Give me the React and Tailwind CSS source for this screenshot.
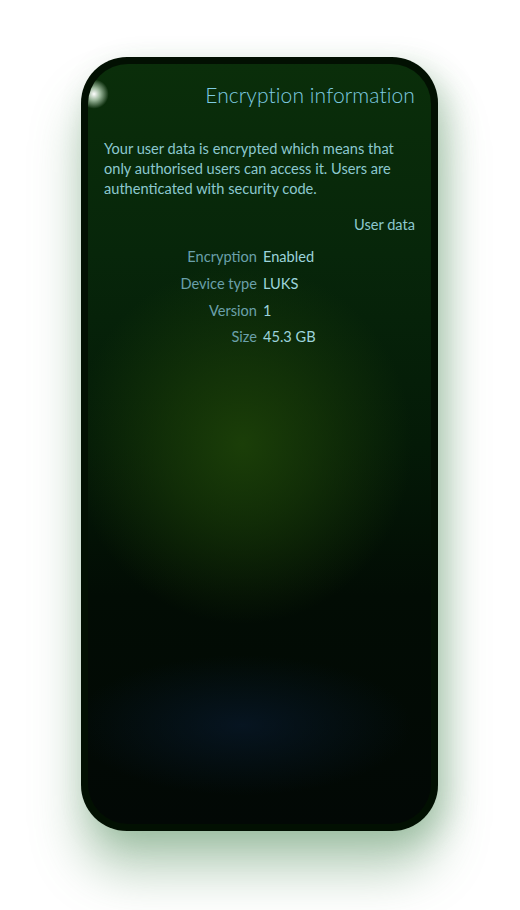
export default function App() {
  const rows = [
    ["Encryption", "Enabled"],
    ["Device type", "LUKS"],
    ["Version", "1"],
    ["Size", "45.3 GB"],
  ];
  return (
    <div className="w-[520px] h-[910px] bg-white relative overflow-hidden" style={{ fontFamily: "Lato, 'Open Sans', sans-serif" }}>
      <div className="absolute left-[81px] top-[57px] w-[357px] h-[774px] rounded-[46px] bg-[#021002] shadow-[0_40px_50px_rgba(80,140,90,0.4),10px_10px_30px_rgba(80,140,90,0.3)] p-[7px]">
        <div
          className="relative w-full h-full rounded-[40px] overflow-hidden"
          style={{
            background:
              "radial-gradient(ellipse 170px 180px at 45% 50%, rgba(28,64,8,0.95), rgba(28,64,8,0.55) 45%, rgba(28,64,8,0) 100%), radial-gradient(ellipse 170px 70px at 45% 87%, rgba(8,24,42,0.75), rgba(8,24,42,0) 100%), linear-gradient(to bottom, #0a2e0a 0%, #07260a 25%, #041a07 50%, #020c04 70%, #020805 100%)",
          }}
        >
          <div className="absolute left-[-10px] top-[14px] w-[32px] h-[32px] rounded-full bg-[radial-gradient(circle,rgba(255,255,255,1)_0%,rgba(230,255,230,0.65)_28%,rgba(255,255,255,0)_65%)]" />
          <div className="relative flex flex-col pl-[16px] pr-[16px]">
            <div className="pt-[16px] text-right text-[21px] font-light text-[#7ecbe0] leading-[30px] tracking-[0.1px]">Encryption information</div>
            <p className="mt-[29px] text-[14.6px] leading-[20px] text-[#8cc8cf]">
              Your user data is encrypted which means that only authorised users can access it. Users are authenticated with security code.
            </p>
            <div className="mt-[16px] text-right text-[14.6px] leading-[20px] text-[#8cc8cf]">User data</div>
            <div className="mt-[9px] flex flex-col">
              {rows.map(([k, v]) => (
                <div key={k} className="flex h-[26.7px] items-center text-[14.6px]">
                  <div className="w-[153px] text-right text-[#6aa0aa]">{k}</div>
                  <div className="ml-[6px] text-[#9cd4dc]">{v}</div>
                </div>
              ))}
            </div>
          </div>
        </div>
      </div>
    </div>
  );
}
